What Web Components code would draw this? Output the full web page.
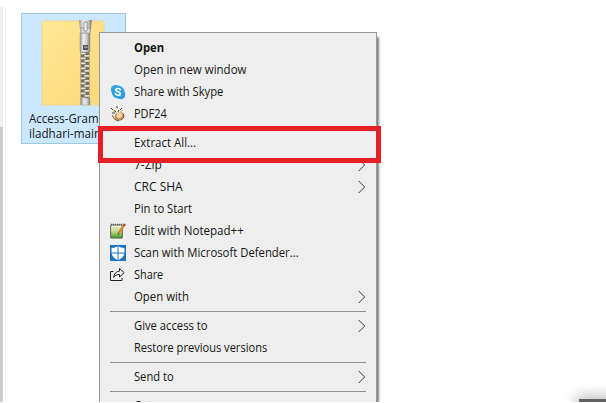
<!DOCTYPE html>
<html lang="en"><head><meta charset="utf-8"><title>Context menu</title>
<style>
html,body{margin:0;height:403px;overflow:hidden;background:#fff}
body{font:12px/22px "Open Sans","Noto Sans",sans-serif;color:#151515}
</style></head><body>
<file-window>
  <zip-file><fit-text w="70" slot="name">Access-Gram</fit-text><fit-text w="72" slot="name">iladhari-main</fit-text></zip-file>
  <context-menu>
    <menu-row bold><fit-text w="30">Open</fit-text></menu-row>
    <menu-row><fit-text w="112">Open in new window</fit-text></menu-row>
    <menu-row><svg slot="icon" width="16" height="16" viewBox="0 0 16 16"><circle cx="5.5" cy="5.5" r="4.6" fill="#36a4dc"/><circle cx="10.8" cy="10.8" r="4.5" fill="#2c9bd8"/><circle cx="8" cy="8" r="6.4" fill="#32a1de"/><path d="M10.4 5.8C9.9 4 5.8 4 5.8 6.1c0 2.1 4.6 1.3 4.6 3.6 0 2.2-4.2 2.1-4.9.1" fill="none" stroke="#fff" stroke-width="1.5" stroke-linecap="round"/></svg><fit-text w="89">Share with Skype</fit-text></menu-row>
    <menu-row><svg slot="icon" width="16" height="16" viewBox="0 0 16 16"><path d="M1 3l4 1 1-3 2 3 4-3-1 4 4 0-3 3-6 0-4 1 1-3z" fill="#f7f3e8"/><path d="M1 2l2 2M7 0v2.4M12 2l-2 2M2 7l3 0M4.5 4l1.5 2.5M9 4l-1 2" stroke="#40372f" stroke-width="1"/><path d="M5 9c1-3 8-4 9-1s-2 7-5 7-5-3-4-6z" fill="#c99555"/><path d="M7 8c1-1 4-2 5 0s-1 4-3 4-3-2-2-4z" fill="#f3d5a5"/><path d="M2 9l3 4.5 4 1.5M13.5 8l.5 3-3 3" fill="none" stroke="#68462c" stroke-width=".9"/><path d="M3 5l2 1M10 6l3-2" stroke="#d4a63e"/></svg><fit-text w="33">PDF24</fit-text></menu-row>
    <menu-rule></menu-rule>
    <menu-row marked><fit-text w="62">Extract All...</fit-text></menu-row>
    <menu-row more><fit-text w="28">7-Zip</fit-text></menu-row>
    <menu-row more><fit-text w="49">CRC SHA</fit-text></menu-row>
    <menu-row><fit-text w="58">Pin to Start</fit-text></menu-row>
    <menu-row><svg slot="icon" width="16" height="16" viewBox="0 0 16 16"><defs><linearGradient id="g" x2="0" y2="1"><stop stop-color="#f9fff0"/><stop offset=".4" stop-color="#d6eba2"/><stop offset="1" stop-color="#3d9c20"/></linearGradient></defs><path d="M.7 2h11.6v13H.7z" fill="url(#g)" stroke="#596052"/><path d="M1 1.5h11" stroke="#555" stroke-width="1.7" stroke-dasharray="1 1"/><path d="M2.5 5h7M2.5 7h6" stroke="#bec8ae"/><path d="M14 2L8 11" stroke="#d9862d" stroke-width="2.3"/><path d="M14.9 1l-1.2 1.8" stroke="#b64840" stroke-width="2.6"/><path d="M8.5 9.8l-1 2.5 2-1.4" fill="#59422e"/></svg><fit-text w="110">Edit with Notepad++</fit-text></menu-row>
    <menu-row><svg slot="icon" width="16" height="16" viewBox="0 0 16 16"><path fill="#1673be" d="M0 0h16v16H0z"/><path d="M8 1c1.8 1.3 3.8 1.9 6.5 2v4.3c0 3.7-2.8 6.4-6.5 7.9-3.7-1.5-6.5-4.2-6.5-7.9V3C4.200 2.900 6.200 2.300 8 1z" fill="#fff"/><path d="M8 1v14.500M1 8h14" stroke="#1673be"/></svg><fit-text w="165">Scan with Microsoft Defender...</fit-text></menu-row>
    <menu-row><svg slot="icon" width="16" height="16" viewBox="0 0 16 16" fill="none" stroke="#222"><path d="M3.500 4.500h-3v9h11.500v-2.500"/><path d="M9.500 1.500l4.700 4.200-4.700 4.300V7.500C6.800 7.300 5 8.500 3.700 10.500 4 6.700 6 4.400 9.500 4.100z" stroke-linejoin="round"/></svg><fit-text w="29">Share</fit-text></menu-row>
    <menu-row more><fit-text w="55">Open with</fit-text></menu-row>
    <menu-rule></menu-rule>
    <menu-row more><fit-text w="74">Give access to</fit-text></menu-row>
    <menu-row><fit-text w="133">Restore previous versions</fit-text></menu-row>
    <menu-rule></menu-rule>
    <menu-row more><fit-text w="40">Send to</fit-text></menu-row>
    <menu-rule></menu-rule>
    <menu-row><fit-text w="18">Cut</fit-text></menu-row>
  </context-menu>
</file-window>
<script>
const define=(name,html,setup)=>customElements.define(name,class extends HTMLElement{
  connectedCallback(){ if(this.shadowRoot)return; this.attachShadow({mode:'open'}).innerHTML=html; if(setup)setup(this); }
});
define('file-window',`<style>
:host{display:block;position:relative;width:606px;height:402px;overflow:hidden;background:#fff}
.rail{box-sizing:border-box;width:6px;height:402px;padding-top:7px;display:grid;grid-template-columns:3px 1fr;background:#fff}
.bar{background:linear-gradient(#f0f0f0 120px,#cdcdcd 120px)}.gap{border-right:1px solid #eee}
.corner{position:absolute;left:579px;top:399px;width:40px;height:20px;background:#626262;box-shadow:0 0 14px 3px #0004}
</style><div class="rail"><div class="bar"></div><div class="gap"></div></div><div class="corner"></div><slot></slot>`);
define('zip-file',`<style>
:host{position:absolute;left:21px;top:13px;box-sizing:border-box;width:105px;height:131px;border:1px solid #99cbe9;background:#cce8ff;padding:6px 0 0 7px;line-height:15px}
svg{display:block;margin-left:12px}.names{display:grid;padding-top:5px}
</style><svg width="64" height="86" viewBox="0 0 64 86"><defs>
<linearGradient id="f" x2="1" y2="1"><stop stop-color="#ffe797"/><stop offset="1" stop-color="#fbd978"/></linearGradient>
<linearGradient id="m"><stop stop-color="#999"/><stop offset=".35" stop-color="#eee"/><stop offset=".7" stop-color="#cacaca"/><stop offset="1" stop-color="#777"/></linearGradient>
<pattern id="t" width="8" height="5" patternUnits="userSpaceOnUse" x="40" y="32"><path fill="#77705f" d="M0 0h8v5H0z"/><path fill="#e5e2da" d="M0 .5h4.5v1.7H0zM3.5 3h4.5v1.7h-4.5z"/></pattern></defs>
<path d="M1 1h62v84H1z" fill="url(#f)" stroke="#eed17f" stroke-width=".7"/><path d="M39 31h10v54H39z" fill="#c3ad70"/><path d="M40 31h8v48h-8z" fill="url(#t)"/>
<path d="M38 0h13l-1 9-1 5h-9l-1-5z" fill="url(#m)"/><path d="M39 13h10v19H39z" fill="url(#m)" stroke="#999" stroke-width=".5"/><path d="M40 8h9v5h-9z" fill="#ddd" stroke="#888" stroke-width=".6"/><path d="M43 2h3v9h-3z" fill="#f4f4f4" stroke="#777" stroke-width=".7"/><path d="M42 25h5v5h-5z" fill="#555"/><path d="M43 27h3v1" stroke="#bbb" fill="none"/><path d="M40 78h9v7h-9z" fill="url(#m)" stroke="#999" stroke-width=".5"/></svg><div class="names"><slot name="name"></slot></div>`);
define('context-menu',`<style>
:host{position:absolute;left:99px;top:32px;box-sizing:border-box;width:278px;height:390px;border:1px solid #999;background:#eee;padding:4px 0 0;display:flex;flex-direction:column;box-shadow:2px 5px 2px #555b}
</style><slot></slot>`);
define('menu-row',`<style>
:host{display:grid;position:relative;flex:none;height:22px;grid-template-columns:16px 1fr 8px;column-gap:8px;align-items:center;padding:0 10px}
:host([bold]){font-weight:700}
.icon{height:16px;line-height:0}.arrow{visibility:hidden;display:block}:host([more]) .arrow{visibility:visible}
.mark{display:none}:host([marked]){z-index:2}
:host([marked]) .mark{display:block;position:absolute;box-sizing:border-box;left:-2px;top:-6px;width:283px;height:37px;border:5px solid #e61f27}
</style><div class="icon"><slot name="icon"></slot></div><slot></slot><svg class="arrow" width="8" height="14" viewBox="0 0 8 14"><path d="M.7 1l6 6-6 6" fill="none" stroke="#3b3b3b" stroke-width="1"/></svg><div class="mark"></div>`);
define('menu-rule',`<style>:host{flex:none;box-sizing:border-box;height:7px;padding:3px 10px}div{height:1px;background:#919191}</style><div></div>`);
define('fit-text',`<style>:host{display:block;white-space:pre}span{display:inline-block;transform-origin:0 50%}</style><span><slot></slot></span>`,el=>{
  const s=el.shadowRoot.querySelector('span'); s.style.transform='scaleX('+(+el.getAttribute('w')/s.offsetWidth)+')';
});
</script></body></html>
